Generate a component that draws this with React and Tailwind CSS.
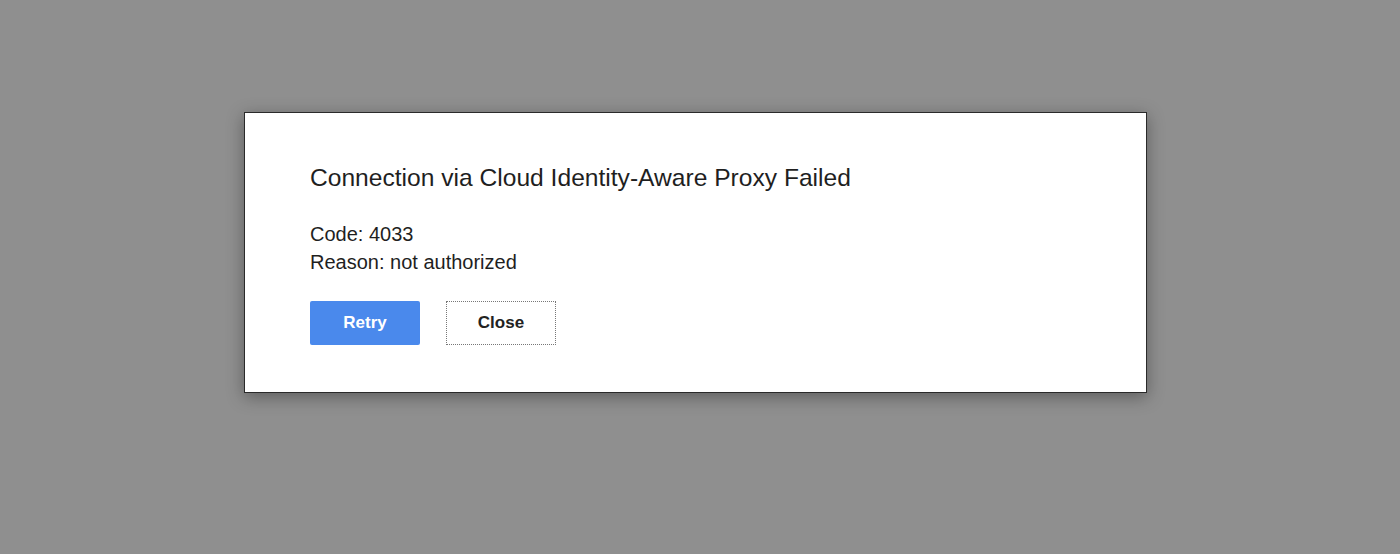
export default function App() {
  return (
    <div className="flex h-[554px] w-full flex-col items-center bg-[#8f8f8f] pt-[112px] font-['Liberation_Sans',Arial,sans-serif]">
      <div className="ml-[-9px] h-[281px] w-[903px] border border-[#2a2a2a] bg-white pl-[65px] pt-[51px] text-[#1f1f1f] shadow-[0_4px_16px_rgba(0,0,0,0.35)]">
        <h1 className="text-[24.6px] leading-[28px]">Connection via Cloud Identity-Aware Proxy Failed</h1>
        <div className="mt-[28px] text-[20px] leading-[28px]">
          <p>Code: 4033</p>
          <p>Reason: not authorized</p>
        </div>
        <div className="mt-[25px] flex gap-[26px]">
          <button className="h-[44px] w-[110px] rounded-[2px] bg-[#4a89ec] text-[17px] font-bold text-white">
            Retry
          </button>
          <button className="h-[44px] w-[110px] border border-dotted border-[#777] bg-white text-[17px] font-bold text-[#222]">
            Close
          </button>
        </div>
      </div>
    </div>
  )
}
